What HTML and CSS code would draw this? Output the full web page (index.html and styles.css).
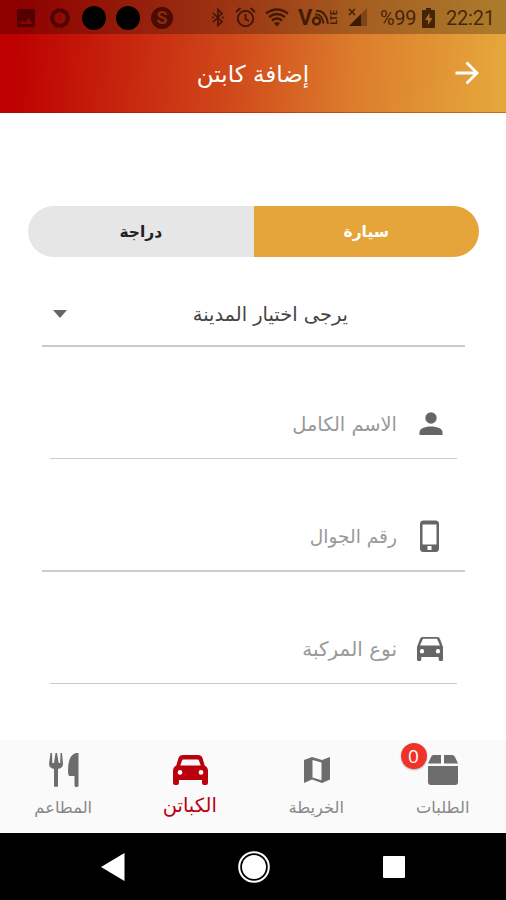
FILE: index.html
```html
<!DOCTYPE html>
<html lang="ar">
<head>
<meta charset="utf-8">
<title>إضافة كابتن</title>
<link rel="stylesheet" href="styles.css">
</head>
<body>
<div class="screen">
  <header class="top">
    <div class="status">
      <div class="notices">
        <svg width="18" height="18" viewBox="0 0 18 18"><path fill-rule="evenodd" d="M2 0h14a2 2 0 0 1 2 2v14a2 2 0 0 1-2 2H2a2 2 0 0 1-2-2V2a2 2 0 0 1 2-2zm0 15h14l-4.500-6-3.500 4.500L5.500 11z"/></svg>
        <svg width="20" height="20" viewBox="0 0 20 20" fill="none" stroke="currentColor"><circle cx="10" cy="10" r="7.500" stroke-width="3.600"/><circle cx="10" cy="10" r="9.200" stroke-width="1.300" stroke-dasharray="4 1.500"/><path d="M8 8l2-1v5" stroke-width="1" opacity=".5"/></svg>
        <i class="dot"></i>
        <i class="dot"></i>
        <span class="coin">S</span>
      </div>
      <div class="system">
        <svg class="bt" width="12" height="19" viewBox="0 0 12 19" fill="none" stroke="currentColor" stroke-width="1.700"><path d="M1 5l9 8.500-4 4v-16l4 4L1 14"/><path d="M0 9.500h2M10 9.500h2"/></svg>
        <svg class="alarm" width="21" height="21" viewBox="0 0 21 21" fill="none" stroke="currentColor" stroke-width="1.900"><circle cx="10.500" cy="11.500" r="7.700"/><path d="M10.500 7v5l3.500 2M1 5l4.500-4M20 5l-4.500-4"/></svg>
        <svg class="wifi" width="24" height="19" viewBox="0 0 24 19" fill="none" stroke="currentColor" stroke-width="2.400"><path d="M1 5.500Q12-2.500 23 5.500M4 9Q12 3 20 9M7 12.500Q12 8.500 17 12.500"/><path d="M9 15.200Q12 13 15 15.200L12 18.500z" fill="currentColor" stroke="none"/></svg>
        <span class="volte"><b>V</b><svg width="19" height="18" viewBox="0 0 19 18" fill="none" stroke="currentColor"><circle cx="5.500" cy="12" r="3.500" stroke-width="2.500"/><path d="M4 5.500q7-1 8.500 9M5 1.800q10-.5 12 13" stroke-width="1.900"/></svg><small>LTE</small></span>
        <svg class="signal" width="20" height="19" viewBox="0 0 20 19"><path d="M19 0v18H1z" opacity=".4"/><path d="M13 6v12H1z"/><path d="M1 1l6 6M7 1L1 7" stroke="currentColor" stroke-width="1.600"/></svg>
        <span class="percent">%99</span>
        <svg class="battery" width="13" height="20" viewBox="0 0 13 20"><path fill-rule="evenodd" d="M4 0h5v2h3a1 1 0 0 1 1 1v16a1 1 0 0 1-1 1H1a1 1 0 0 1-1-1V3a1 1 0 0 1 1-1h3zm3.500 5L3 12h3v5l4.500-7H7.500z"/></svg>
        <span class="clock">22:21</span>
      </div>
    </div>
    <div class="appbar">
      <h1 dir="rtl">إضافة كابتن</h1>
      <svg class="forward" width="24" height="24" viewBox="0 0 24 24" fill="none" stroke="#fff" stroke-width="2.800"><path d="M.5 12h21M11.500 1.500L22 12 11.500 22.500"/></svg>
    </div>
  </header>

  <main class="form">
    <div class="switch" dir="rtl">
      <div class="option on"><span>سيارة</span></div>
      <div class="option"><span>دراجة</span></div>
    </div>
    <div class="select">
      <i class="caret"></i>
      <span dir="rtl">يرجى اختيار المدينة</span>
    </div>
    <div class="field narrow">
      <span class="name" dir="rtl">الاسم الكامل</span>
      <svg width="26" height="26" viewBox="0 0 26 26"><circle cx="14" cy="7" r="5.700"/><path d="M2.500 24v-2.800C2.500 17 9.500 15.500 14 15.500S25.500 17 25.500 21.200V24z"/></svg>
    </div>
    <div class="field">
      <span class="phone" dir="rtl">رقم الجوال</span>
      <svg width="26" height="32" viewBox="0 0 26 32"><path fill-rule="evenodd" d="M6.500 0.500h12A3.500 3.500 0 0 1 22 4v24.500a3.500 3.500 0 0 1-3.500 3.500h-12A3.500 3.500 0 0 1 3 28.500V4A3.500 3.500 0 0 1 6.500 .5zM5.500 4.500v20h14v-20zM10.500 26v4h4v-4z"/></svg>
    </div>
    <div class="field narrow last">
      <span class="vehicle" dir="rtl">نوع المركبة</span>
      <svg width="26" height="24" viewBox="0 0 26 24"><path fill-rule="evenodd" d="M5.500 0h15q1.800 0 2.400 1.700L26 10v12.500a1.500 1.500 0 0 1-1.500 1.500h-1.300a1.500 1.500 0 0 1-1.500-1.500V20H4.300v2.500A1.500 1.500 0 0 1 2.800 24H1.500A1.500 1.500 0 0 1 0 22.500V10l3.100-8.300Q3.700 0 5.500 0zM6 1.800L3 8.500h20l-3-6.700zM5 12a2.200 2.200 0 1 0 0 4.400A2.200 2.200 0 0 0 5 12zm16 0a2.200 2.200 0 1 0 0 4.400 2.200 2.200 0 0 0 0-4.400z"/></svg>
    </div>
  </main>

  <nav class="tabs">
    <div class="tab">
      <svg width="30" height="34" viewBox="0 0 30 34"><path d="M1.500 0L0 11q0 4 5 5v16.500q0 1.500 2 1.500t2-1.500V16q5-1 5-5L13 0h-1.500l-.3 10h-1.500L8 0H6.500L5 10H3.300L3 0zM29.500 0v32.500q0 1.500-2 1.500t-2-1.500V23H20q-1-1-1-5Q19 2 27 0z"/></svg>
      <span class="t1" dir="rtl">المطاعم</span>
    </div>
    <div class="tab active">
      <svg width="35" height="30" viewBox="0 0 35 30"><path fill-rule="evenodd" d="M10 0h15q3.500 0 4.500 3l2.200 7.500Q35 12 35 16v12q0 2-2 2h-2q-2 0-2-2v-3H6v3q0 2-2 2H2q-2 0-2-2V16q0-4 3.300-5.500L5.500 3Q6.500 0 10 0zm.5 4.500Q9.300 4.500 9 5.500L7.300 10.500h20.400L26 5.500q-.3-1-1.500-1zM7 15a2.400 2.400 0 1 0 0 4.800A2.400 2.400 0 0 0 7 15zm21 0a2.400 2.400 0 1 0 0 4.800 2.400 2.400 0 0 0 0-4.800z"/></svg>
      <span class="t2" dir="rtl">الكباتن</span>
    </div>
    <div class="tab">
      <svg width="26" height="26" viewBox="0 0 26 26"><path fill-rule="evenodd" d="M0 3l8-3 10 3 8-3v22.500L18 26 8 22.500 0 26zM8.500 3v17.500l9 2.800V5.500z"/></svg>
      <span class="t3" dir="rtl">الخريطة</span>
    </div>
    <div class="tab">
      <svg width="30" height="30" viewBox="0 0 30 30"><path d="M5.500 0H13v8.500H0L3 2q.8-2 2.500-2zM16 0h8.500Q26 0 27 2l3 6.500H16zM0 11h30v16q0 3-3 3H3q-3 0-3-3z"/></svg>
      <b class="badge">0</b>
      <span class="t4" dir="rtl">الطلبات</span>
    </div>
  </nav>

  <footer class="keys">
    <svg width="24" height="28" viewBox="0 0 24 28"><path d="M23.500 0v28L0 14z"/></svg>
    <svg width="32" height="32" viewBox="0 0 32 32"><circle cx="16" cy="16" r="14.800" fill="none" stroke="#fff" stroke-width="2"/><circle cx="16" cy="16" r="12"/></svg>
    <svg width="22" height="22" viewBox="0 0 22 22"><rect width="22" height="22" rx="1"/></svg>
  </footer>
</div>
</body>
</html>
```

FILE: styles.css
```css
* { box-sizing: border-box; }
body { margin: 0; font-family: "DejaVu Sans", sans-serif; background: #fff; }
svg { display: block; flex: none; fill: currentColor; }
svg[fill="none"] { fill: none; }
span, h1 { white-space: nowrap; }
.screen { width: 506px; height: 900px; display: flex; flex-direction: column; overflow: hidden; }

.top { height: 113px; background: linear-gradient(94deg, #bd0000 3%, #d0491a 46%, #dc7d2c 70%, #e5a63b 98%); border-bottom: 1px solid rgba(150, 20, 0, .4); }
.status { height: 34px; background: rgba(0, 0, 0, .25); display: flex; justify-content: space-between; align-items: center; padding: 1px 11px 0 17px; color: rgba(35, 12, 0, .75); font-family: Roboto, sans-serif; }
.notices { display: flex; align-items: center; gap: 12px; color: rgba(50, 0, 0, .65); }
.notices svg:nth-child(2) { margin: 0 0 0 3px; }
.dot { width: 24px; height: 24px; border-radius: 50%; background: #000; }
.dot + .dot { margin-left: -2px; }
.coin { width: 22px; height: 22px; border-radius: 50%; background: rgba(50, 5, 0, .75); color: #8b2c0e; font-size: 18px; line-height: 22px; text-align: center; font-weight: 700; margin-left: -1px; }
.system { display: flex; align-items: center; }
.alarm { margin-left: 11px; }
.wifi { margin-left: 9px; }
.volte { display: flex; align-items: center; margin-left: 9px; width: 42px; height: 22px; }
.volte b { font-size: 22px; width: 13px; }
.volte small { font-size: 9px; font-weight: 700; line-height: 9px; writing-mode: vertical-rl; transform: rotate(180deg); }
.signal { margin-left: 8px; }
.percent { font-size: 20px; width: 37px; margin-left: 12px; letter-spacing: -.3px; }
.battery { margin-left: 5px; }
.clock { font-size: 20px; width: 49px; margin-left: 11px; letter-spacing: -.2px; }

.appbar { height: 78px; display: grid; grid-template-columns: 1fr 111px 1fr; align-items: center; color: #fff; }
.appbar h1 { grid-column: 2; margin: 0; padding-top: 2px; font-size: 23px; font-weight: 400; text-align: center; justify-self: center; }
.forward { justify-self: end; margin-right: 27px; }

.form { height: 627px; padding: 93px 41px 0 42px; color: #666; }
.switch { display: flex; height: 51px; margin: 0 -14px; border-radius: 26px; overflow: hidden; }
.option { flex: 1; display: flex; align-items: center; justify-content: center; background: #e6e6e6; color: #222; font-size: 15.500px; font-weight: 700; }
.option.on { background: #e5a53b; color: #fff; }
.select { height: 90px; border-bottom: 2px solid #c9cbc9; display: flex; align-items: center; padding: 26px 117px 0 11px; justify-content: space-between; color: #444; font-size: 19.400px; }
.caret { border: 7px solid transparent; border-top: 8px solid #666; border-bottom: 0; }
.field { height: 113px; border-bottom: 2px solid #ccc; display: flex; align-items: center; justify-content: flex-end; gap: 20px; padding: 43px 22px 0 0; font-size: 19px; }
.field span { color: #999; }
.field .name { font-size: 19.400px; }
.field .phone { font-size: 18.600px; }
.field .vehicle { font-size: 20px; }
.narrow { height: 112px; margin: 0 8px; padding-right: 14px; border-bottom-width: 1px; }

.tabs { height: 93px; background: #fafafa; display: grid; grid-template-columns: repeat(4, 1fr); color: #6d6d6d; }
.tab { position: relative; display: grid; grid-template-rows: 60px 14px; justify-items: center; align-items: center; }
.tab svg { margin-left: 1px; }
.tab span { color: #888; font-size: 16.300px; }
.tab.active, .tab.active span { color: #bb000e; }
.tab.active span { font-size: 19.500px; margin-top: -4px; }
.badge { position: absolute; left: 21px; top: 3px; width: 26px; height: 26px; border-radius: 50%; background: #ef3329; color: #fff; font: 400 19px/26px "Open Sans", sans-serif; text-align: center; box-shadow: 0 1px 2px rgba(0, 0, 0, .3); }

.keys { height: 67px; background: #000; color: #fff; display: flex; justify-content: space-between; align-items: center; padding: 0 101px; }
```
